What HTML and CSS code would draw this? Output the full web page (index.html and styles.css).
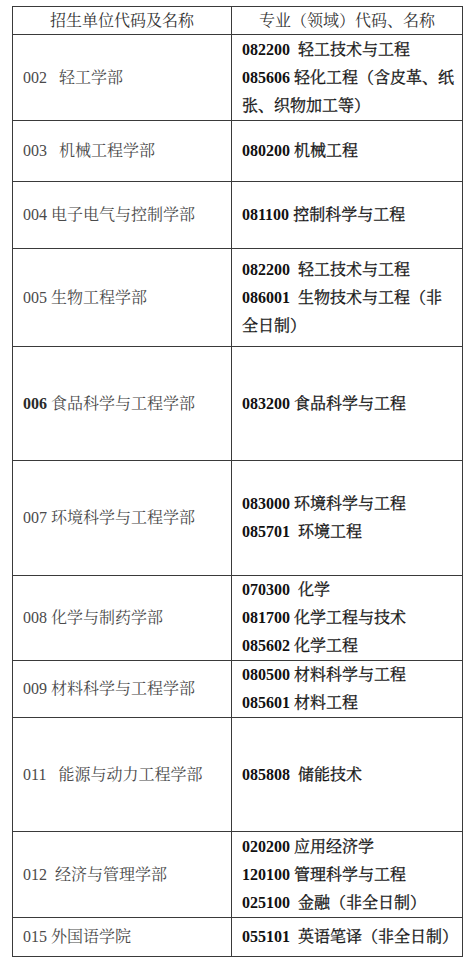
FILE: index.html
```html
<!DOCTYPE html>
<html lang="zh-CN">
<head>
<meta charset="utf-8">
<title>招生单位及专业</title>
<link rel="stylesheet" href="styles.css">
</head>
<body>
<div class="sheet">
  <div class="cell head">招生单位代码及名称</div>
  <div class="cell head">专业（领域）代码、名称</div>

  <div class="cell unit"><div class="line">002&nbsp;&nbsp; 轻工学部</div></div>
  <div class="cell major">
    <div class="line"><b>082200</b>&nbsp; 轻工技术与工程</div>
    <div class="line"><b>085606</b> 轻化工程（含皮革、纸<br>张、织物加工等）</div>
  </div>

  <div class="cell unit"><div class="line">003&nbsp;&nbsp; 机械工程学部</div></div>
  <div class="cell major">
    <div class="line"><b>080200</b> 机械工程</div>
  </div>

  <div class="cell unit"><div class="line">004 电子电气与控制学部</div></div>
  <div class="cell major">
    <div class="line"><b>081100</b> 控制科学与工程</div>
  </div>

  <div class="cell unit"><div class="line">005 生物工程学部</div></div>
  <div class="cell major">
    <div class="line"><b>082200</b>&nbsp; 轻工技术与工程</div>
    <div class="line"><b>086001</b>&nbsp; 生物技术与工程（非<br>全日制）</div>
  </div>

  <div class="cell unit"><div class="line"><b>006</b> 食品科学与工程学部</div></div>
  <div class="cell major">
    <div class="line"><b>083200</b> 食品科学与工程</div>
  </div>

  <div class="cell unit"><div class="line">007 环境科学与工程学部</div></div>
  <div class="cell major">
    <div class="line"><b>083000</b> 环境科学与工程</div>
    <div class="line"><b>085701</b>&nbsp; 环境工程</div>
  </div>

  <div class="cell unit"><div class="line">008 化学与制药学部</div></div>
  <div class="cell major">
    <div class="line"><b>070300</b>&nbsp; 化学</div>
    <div class="line"><b>081700</b> 化学工程与技术</div>
    <div class="line"><b>085602</b> 化学工程</div>
  </div>

  <div class="cell unit"><div class="line">009 材料科学与工程学部</div></div>
  <div class="cell major">
    <div class="line"><b>080500</b> 材料科学与工程</div>
    <div class="line"><b>085601</b> 材料工程</div>
  </div>

  <div class="cell unit"><div class="line">011&nbsp;&nbsp; 能源与动力工程学部</div></div>
  <div class="cell major">
    <div class="line"><b>085808</b>&nbsp; 储能技术</div>
  </div>

  <div class="cell unit"><div class="line">012&nbsp; 经济与管理学部</div></div>
  <div class="cell major">
    <div class="line"><b>020200</b> 应用经济学</div>
    <div class="line"><b>120100</b> 管理科学与工程</div>
    <div class="line"><b>025100</b>&nbsp; 金融（非全日制）</div>
  </div>

  <div class="cell unit last"><div class="line">015 外国语学院</div></div>
  <div class="cell major last">
    <div class="line"><b>055101</b>&nbsp; 英语笔译（非全日制）</div>
  </div>
</div>
</body>
</html>
```
FILE: styles.css
```css
html, body {
  margin: 0;
  padding: 0;
  background: #ffffff;
}

body {
  font-family: "Liberation Serif", "Noto Serif CJK SC", "Noto Sans CJK SC", serif;
  font-size: 16px;
}

.sheet {
  display: grid;
  grid-template-columns: 219px 231px;
  grid-template-rows: 28px 86px 61px 67px 98px 114px 115px 85px 57px 114px 86px 39px;
  width: 451px;
  margin: 6px 0 0 12px;
  border-top: 1px solid #3a3a3a;
  border-left: 1px solid #3a3a3a;
  box-sizing: border-box;
}

.cell {
  box-sizing: border-box;
  border-right: 1px solid #3a3a3a;
  border-bottom: 1px solid #3a3a3a;
  display: flex;
  flex-direction: column;
  justify-content: center;
  padding: 0 0 0 10px;
  white-space: nowrap;
}

.head {
  align-items: center;
  padding: 0;
  color: #333333;
  line-height: 26px;
}

.unit {
  color: #4a4a4a;
}

.unit b {
  color: #2a2a2a;
}

.major {
  color: #151515;
  -webkit-text-stroke: 0.3px #151515;
}

.major b {
  font-weight: bold;
  color: #111111;
  -webkit-text-stroke: 0;
}

.line {
  line-height: 28px;
}

.last .line {
  line-height: 26px;
}
```
